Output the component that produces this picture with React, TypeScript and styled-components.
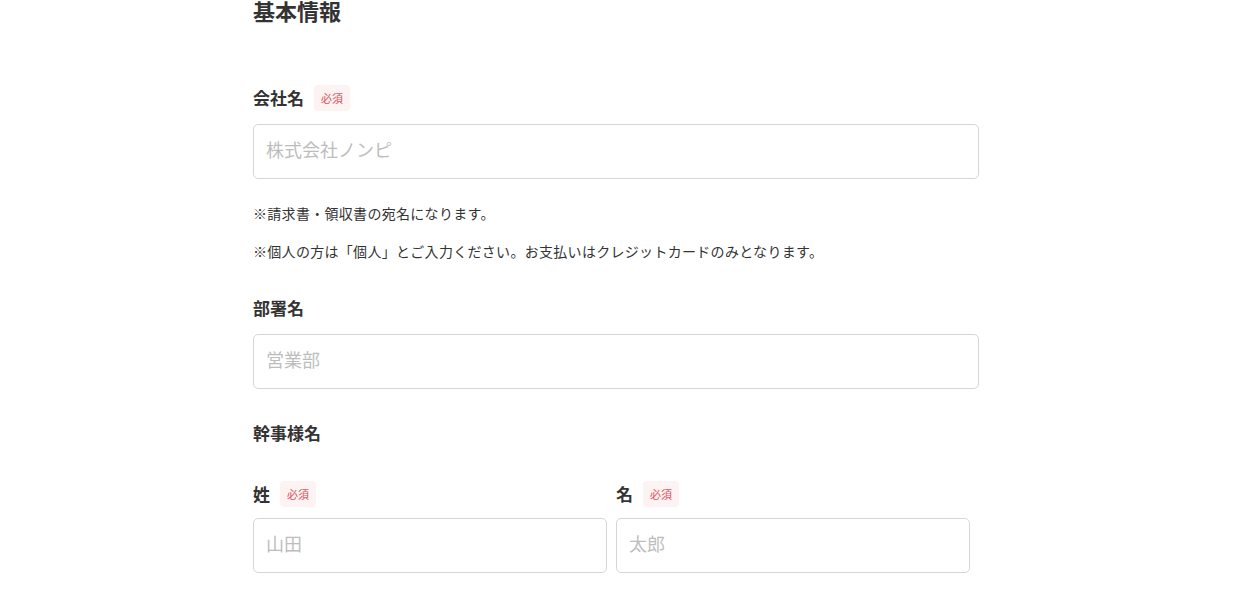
import React from "react";
import styled, { createGlobalStyle } from "styled-components";

const Global = createGlobalStyle`
  html, body { margin: 0; padding: 0; background: #fff; }
  body { font-family: "Noto Sans CJK JP", "Noto Sans", sans-serif; color: #333; }
  * { box-sizing: border-box; }
`;

const Page = styled.div`
  width: 726px;
  margin-left: 253px;
  display: flex;
  flex-direction: column;
`;

const Title = styled.h2`
  margin: 0;
  font-size: 22px;
  line-height: 20px;
  font-weight: 700;
  color: #333;
`;

const Field = styled.div<{ $top: number }>`
  display: flex;
  flex-direction: column;
  gap: 13px;
  margin-top: ${(p) => p.$top}px;
`;

const LabelRow = styled.div`
  display: flex;
  align-items: center;
  height: 26px;
`;

const Label = styled.label`
  font-size: 17px;
  font-weight: 700;
  color: #333;
  line-height: 26px;
`;

const Badge = styled.span`
  margin-left: 10px;
  height: 26px;
  padding: 0 7px;
  display: inline-flex;
  align-items: center;
  background: #fdf3f3;
  color: #e0505a;
  font-size: 11px;
  border-radius: 4px;
`;

const Input = styled.input`
  width: 100%;
  height: 55px;
  border: 1px solid #d6d6d6;
  border-radius: 5px;
  padding: 0 12px 5px;
  font-family: inherit;
  font-size: 18px;
  color: #333;
  outline: none;
  &::placeholder { color: #bdbdbd; }
`;

const Note = styled.p<{ $top: number }>`
  margin: ${(p) => p.$top}px 0 0;
  font-size: 14px;
  line-height: 21px;
  letter-spacing: 0.3px;
  color: #333;
`;

const SectionLabel = styled.div`
  margin-top: 31px;
  height: 26px;
  font-size: 17px;
  font-weight: 700;
  line-height: 26px;
  color: #333;
`;

const NameRow = styled.div`
  display: grid;
  grid-template-columns: 354px 354px;
  column-gap: 9px;
  margin-top: 35px;
`;

const NameField = styled.div`
  display: flex;
  flex-direction: column;
  gap: 11px;
`;

export default function App() {
  return (
    <>
      <Global />
      <Page>
        <Title>基本情報</Title>
        <Field $top={65}>
          <LabelRow>
            <Label>会社名</Label>
            <Badge>必須</Badge>
          </LabelRow>
          <Input placeholder="株式会社ノンピ" />
        </Field>
        <Note $top={24}>※請求書・領収書の宛名になります。</Note>
        <Note $top={17}>※個人の方は「個人」とご入力ください。お支払いはクレジットカードのみとなります。</Note>
        <Field $top={33}>
          <LabelRow>
            <Label>部署名</Label>
          </LabelRow>
          <Input placeholder="営業部" />
        </Field>
        <SectionLabel>幹事様名</SectionLabel>
        <NameRow>
          <NameField>
            <LabelRow>
              <Label>姓</Label>
              <Badge>必須</Badge>
            </LabelRow>
            <Input placeholder="山田" />
          </NameField>
          <NameField>
            <LabelRow>
              <Label>名</Label>
              <Badge>必須</Badge>
            </LabelRow>
            <Input placeholder="太郎" />
          </NameField>
        </NameRow>
      </Page>
    </>
  );
}
